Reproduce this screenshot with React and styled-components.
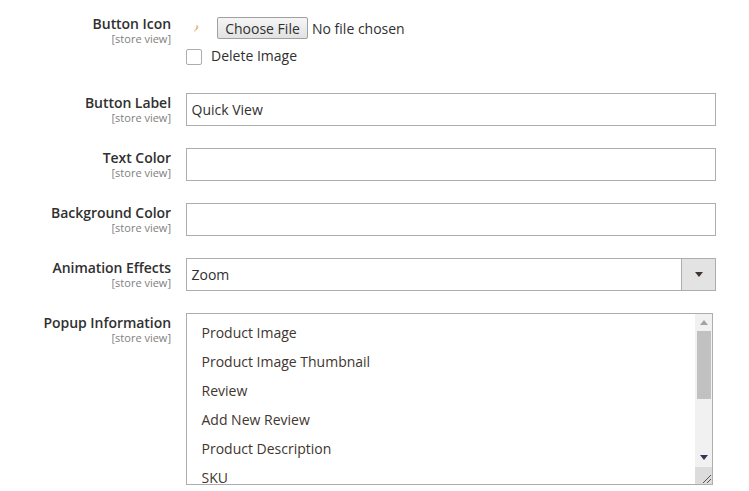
import styled, { createGlobalStyle } from 'styled-components';

const GlobalStyle = createGlobalStyle`
  html, body {
    margin: 0;
    background: #fff;
    overflow: hidden;
  }
  body {
    font-family: "Open Sans", "Liberation Sans", sans-serif;
    font-size: 14px;
    color: #303030;
  }
`

const Form = styled.form`
  width: 716px;
  height: 491px;
  padding-top: 14px;
  box-sizing: border-box;
  display: flex;
  flex-direction: column;
  gap: 22px;
  overflow: hidden;
`

const Row = styled.div`
  display: grid;
  grid-template-columns: 171px 530px;
  column-gap: 15px;
`

const LabelBox = styled.div`
  text-align: right;
`

const LabelText = styled.label`
  display: block;
  font-size: 14px;
  font-weight: 600;
  line-height: 19px;
  letter-spacing: -0.05px;
  color: #303030;
`

const Scope = styled.div`
  font-size: 11px;
  line-height: 12px;
  color: #808080;
`

const FileLine = styled.div`
  display: flex;
  align-items: center;
  height: 22px;
  margin-top: 3px;
  padding-left: 8px;
  gap: 18px;
`

const Thumb = styled.svg`
  width: 5px;
  height: 7px;
  flex: none;
`

const FileInput = styled.input`
  font-family: "Open Sans", "Liberation Sans", sans-serif;
  font-size: 14px;
  color: #303030;
  width: 240px;

  &::file-selector-button {
    font-family: "Open Sans", "Liberation Sans", sans-serif;
    font-size: 14px;
    color: #303030;
    width: 91px;
    height: 22px;
    padding: 0;
    margin-right: 4px;
    background: linear-gradient(#f5f5f5, #e2e2e2);
    border: 1px solid #a0a0a0;
    border-radius: 2px;
  }
`

const DeleteLine = styled.div`
  display: flex;
  align-items: flex-start;
  margin-top: 7px;
  height: 25px;
  gap: 9px;
`

const CheckBox = styled.input`
  appearance: none;
  width: 16px;
  height: 16px;
  margin: 3px 0 0;
  background: #fff;
  border: 1px solid #adadad;
  border-radius: 2px;
`

const DeleteText = styled.label`
  line-height: 19px;
`

const TextInput = styled.input`
  display: block;
  width: 100%;
  height: 33px;
  box-sizing: border-box;
  padding: 0 4.5px;
  font-family: "Open Sans", "Liberation Sans", sans-serif;
  font-size: 14px;
  color: #303030;
  background: #fff;
  border: 1px solid #adadad;
  border-radius: 0;
  outline: none;
`

const SelectBox = styled.div`
  display: flex;
  height: 33px;
  box-sizing: border-box;
  border: 1px solid #adadad;
`

const SelectValue = styled.div`
  flex: 1;
  padding-left: 4.5px;
  line-height: 31px;
`

const SelectArrowBox = styled.div`
  width: 33px;
  display: flex;
  align-items: center;
  justify-content: center;
  background: #e3e3e3;
  border-left: 1px solid #adadad;
`

const ListBox = styled.div`
  display: flex;
  width: 527px;
  height: 172px;
  box-sizing: border-box;
  border: 1px solid #adadad;
`

const OptionList = styled.ul`
  flex: 1;
  list-style: none;
  margin: 0;
  padding: 4px 0 0 14.5px;
  overflow: hidden;
`

const OptionItem = styled.li`
  height: 29px;
  line-height: 29px;
  color: #41362f;
`

const ScrollBar = styled.div`
  width: 17px;
  display: flex;
  flex-direction: column;
  align-items: center;
  background: #f1f1f1;
`

const ScrollArrow = styled.svg`
  width: 8px;
  height: 5px;
  flex: none;
  margin-top: ${p => p.$top}px;
`

const ScrollThumb = styled.div`
  width: 14px;
  height: 68px;
  margin-top: 6px;
  background: #c1c1c1;
`

const ScrollSpace = styled.div`
  flex: 1;
`

const ResizeCorner = styled.svg`
  display: block;
  width: 17px;
  height: 17px;
  margin-top: 7px;
  background: #dcdcdc;
`

const options = [
  'Product Image',
  'Product Image Thumbnail',
  'Review',
  'Add New Review',
  'Product Description',
  'SKU',
];

function Label({ text }) {
  return (
    <LabelBox>
      <LabelText>{text}</LabelText>
      <Scope>[store view]</Scope>
    </LabelBox>
  )
}

export default function App() {
  return (
    <>
      <GlobalStyle />
      <Form>
        <Row>
          <Label text="Button Icon" />
          <div>
            <FileLine>
              <Thumb viewBox="0 0 5 7">
                <path d="M1 6.5 C0.5 4.5 1.5 4 2.5 4.5 L3 0.5 C4.2 1.5 4.2 3.5 2.5 4.5" fill="none" stroke="#e3a562" strokeWidth="0.9" />
              </Thumb>
              <FileInput type="file" />
            </FileLine>
            <DeleteLine>
              <CheckBox type="checkbox" />
              <DeleteText>Delete Image</DeleteText>
            </DeleteLine>
          </div>
        </Row>
        <Row>
          <Label text="Button Label" />
          <TextInput defaultValue="Quick View" />
        </Row>
        <Row>
          <Label text="Text Color" />
          <TextInput />
        </Row>
        <Row>
          <Label text="Background Color" />
          <TextInput />
        </Row>
        <Row>
          <Label text="Animation Effects" />
          <SelectBox>
            <SelectValue>Zoom</SelectValue>
            <SelectArrowBox>
              <svg width="8" height="5" viewBox="0 0 8 5">
                <path d="M0 0 H8 L4 5 Z" fill="#41362f" />
              </svg>
            </SelectArrowBox>
          </SelectBox>
        </Row>
        <Row>
          <Label text="Popup Information" />
          <ListBox>
            <OptionList>
              {options.map(o => <OptionItem key={o}>{o}</OptionItem>)}
            </OptionList>
            <ScrollBar>
              <ScrollArrow $top={6} viewBox="0 0 8 5">
                <path d="M4 0 L8 5 H0 Z" fill="#a3a3a3" />
              </ScrollArrow>
              <ScrollThumb />
              <ScrollSpace />
              <ScrollArrow viewBox="0 0 8 5">
                <path d="M0 0 H8 L4 5 Z" fill="#3a3350" />
              </ScrollArrow>
              <ResizeCorner viewBox="0 0 17 17">
                <path d="M8 16 L16 8 M12 16 L16 12" stroke="#555" strokeWidth="1" fill="none" />
              </ResizeCorner>
            </ScrollBar>
          </ListBox>
        </Row>
      </Form>
    </>
  )
}
